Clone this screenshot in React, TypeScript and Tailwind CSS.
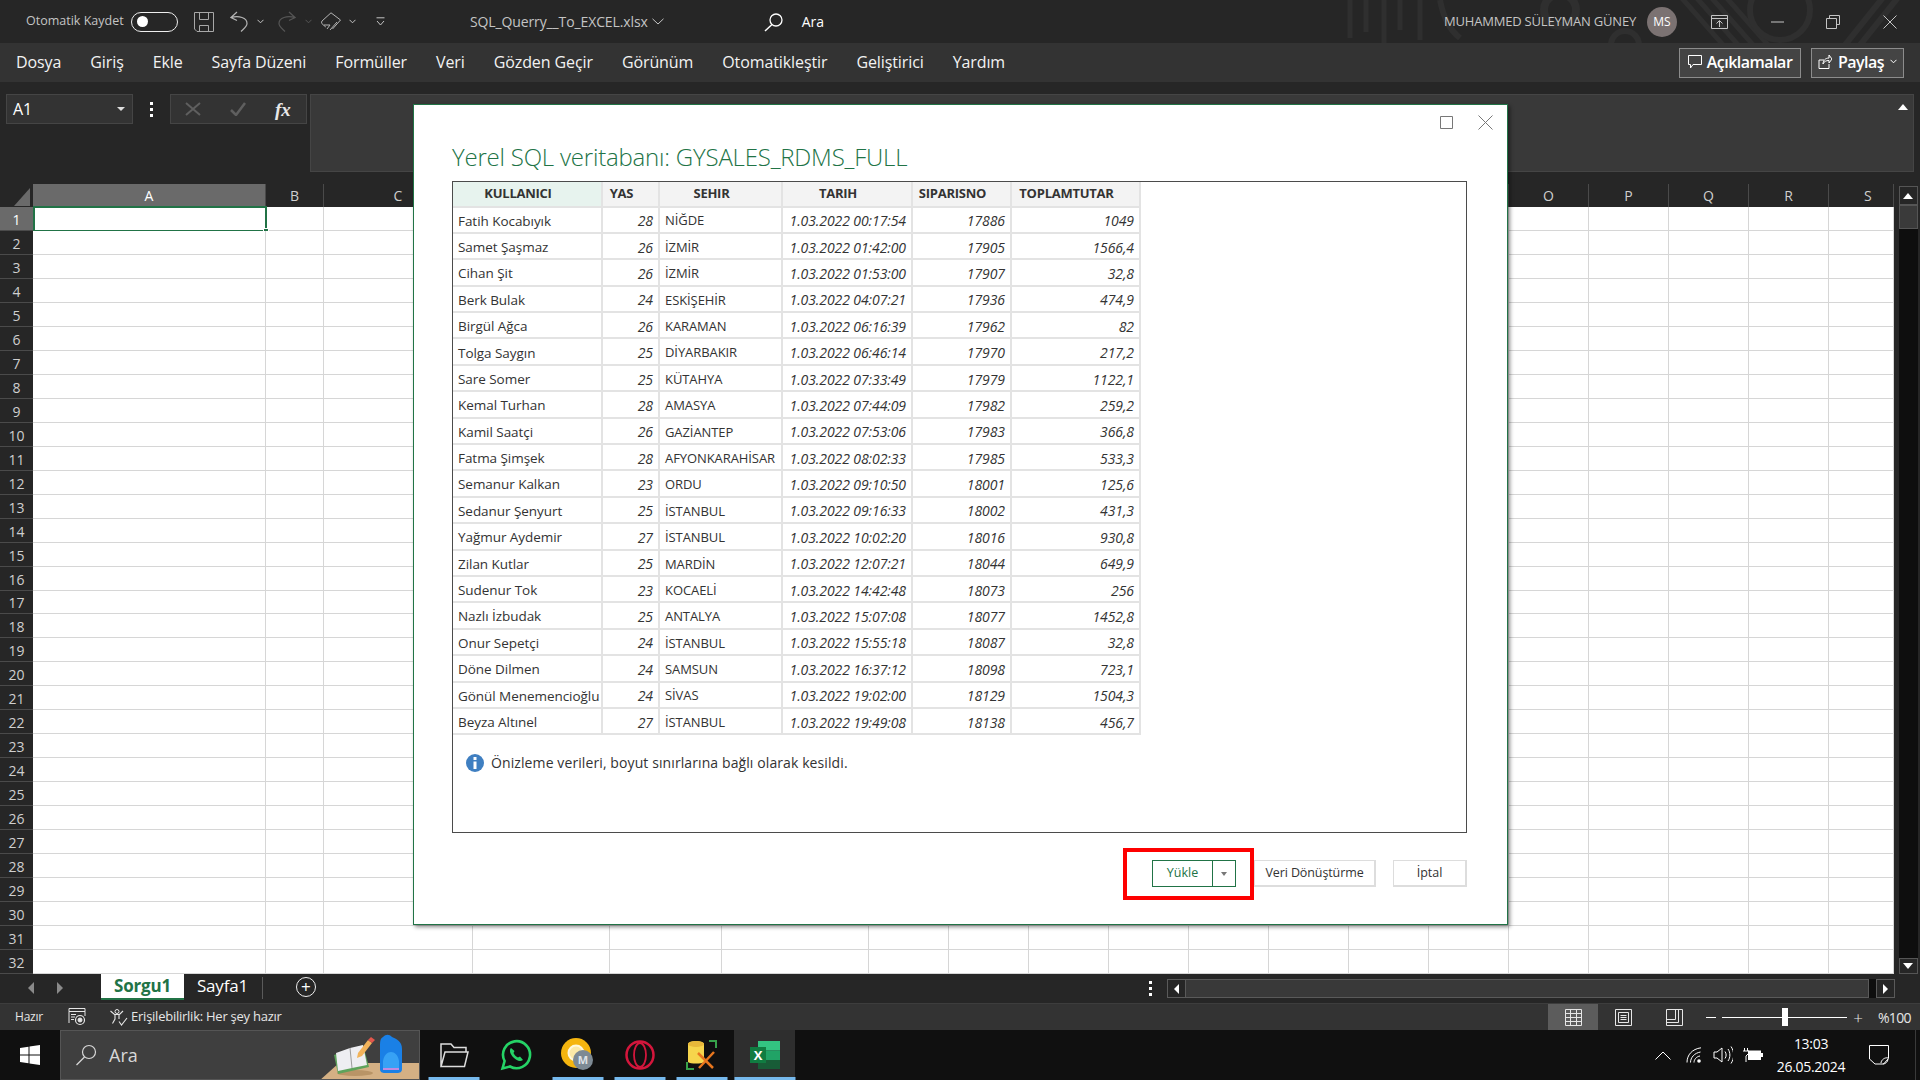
import React from "react";

const font = "font-['Open_Sans','Noto_Sans',sans-serif]";

const rows = [
  ["Fatih Kocabıyık", "28", "NİĞDE", "1.03.2022 00:17:54", "17886", "1049"],
  ["Samet Şaşmaz", "26", "İZMİR", "1.03.2022 01:42:00", "17905", "1566,4"],
  ["Cihan Şit", "26", "İZMİR", "1.03.2022 01:53:00", "17907", "32,8"],
  ["Berk Bulak", "24", "ESKİŞEHİR", "1.03.2022 04:07:21", "17936", "474,9"],
  ["Birgül Ağca", "26", "KARAMAN", "1.03.2022 06:16:39", "17962", "82"],
  ["Tolga Saygın", "25", "DİYARBAKIR", "1.03.2022 06:46:14", "17970", "217,2"],
  ["Sare Somer", "25", "KÜTAHYA", "1.03.2022 07:33:49", "17979", "1122,1"],
  ["Kemal Turhan", "28", "AMASYA", "1.03.2022 07:44:09", "17982", "259,2"],
  ["Kamil Saatçi", "26", "GAZİANTEP", "1.03.2022 07:53:06", "17983", "366,8"],
  ["Fatma Şimşek", "28", "AFYONKARAHİSAR", "1.03.2022 08:02:33", "17985", "533,3"],
  ["Semanur Kalkan", "23", "ORDU", "1.03.2022 09:10:50", "18001", "125,6"],
  ["Sedanur Şenyurt", "25", "İSTANBUL", "1.03.2022 09:16:33", "18002", "431,3"],
  ["Yağmur Aydemir", "27", "İSTANBUL", "1.03.2022 10:02:20", "18016", "930,8"],
  ["Zilan Kutlar", "25", "MARDİN", "1.03.2022 12:07:21", "18044", "649,9"],
  ["Sudenur Tok", "23", "KOCAELİ", "1.03.2022 14:42:48", "18073", "256"],
  ["Nazlı İzbudak", "25", "ANTALYA", "1.03.2022 15:07:08", "18077", "1452,8"],
  ["Onur Sepetçi", "24", "İSTANBUL", "1.03.2022 15:55:18", "18087", "32,8"],
  ["Döne Dilmen", "24", "SAMSUN", "1.03.2022 16:37:12", "18098", "723,1"],
  ["Gönül Menemencioğlu", "24", "SİVAS", "1.03.2022 19:02:00", "18129", "1504,3"],
  ["Beyza Altınel", "27", "İSTANBUL", "1.03.2022 19:49:08", "18138", "456,7"],
];

const menu = [
  "Dosya",
  "Giriş",
  "Ekle",
  "Sayfa Düzeni",
  "Formüller",
  "Veri",
  "Gözden Geçir",
  "Görünüm",
  "Otomatikleştir",
  "Geliştirici",
  "Yardım",
];

// sheet columns: label and width in px (D to N sit behind the dialog, no label needed)
const columns: [string, number][] = [
  ["A", 233],
  ["B", 58],
  ["C", 149],
  ["", 137],
  ["", 112],
  ["", 147],
  ["", 80],
  ["", 80],
  ["", 80],
  ["", 80],
  ["", 80],
  ["", 80],
  ["", 80],
  ["", 80],
  ["O", 80],
  ["P", 80],
  ["Q", 80],
  ["R", 80],
  ["S", 65],
];

const tableCols = [150, 57, 123, 130, 99, 129];
const tableHead = ["KULLANICI", "YAS", "SEHIR", "TARIH", "SIPARISNO", "TOPLAMTUTAR"];

const Ic: React.FC<{ w: number; h?: number; children: React.ReactNode; vb?: string; className?: string }> = ({
  w,
  h,
  children,
  vb,
  className,
}) => (
  <svg
    width={w}
    height={h ?? w}
    viewBox={vb ?? `0 0 ${w} ${h ?? w}`}
    fill="none"
    stroke="currentColor"
    className={`shrink-0 ${className ?? ""}`}
  >
    {children}
  </svg>
);

const Chevron = ({ className }: { className?: string }) => (
  <Ic w={7} h={5} className={className}>
    <path d="M.5 .8 3.500 3.800 6.500 .8" />
  </Ic>
);

const TitleBar = () => (
  <div className="relative flex h-[43px] shrink-0 items-center overflow-hidden bg-[#262626] text-[#c4c4c4]">
    {/* faint office background pattern */}
    <svg width="620" height="43" className="absolute right-0 top-0" fill="none" stroke="#2f2f2f">
      <path d="M50 0v38M66 0v32M84 0v48M100 0v30M120 0v40" strokeWidth="5" />
      <path d="M140 0c4 20 10 30 20 38" strokeWidth="6" />
      <circle cx="260" cy="10" r="16" strokeWidth="8" />
      <circle cx="325" cy="45" r="14" strokeWidth="6" />
      <path d="M380 -4l44 50M395 -4l44 50M410 -4l44 50M425 -4l44 50" strokeWidth="5" />
      <circle cx="480" cy="10" r="30" strokeWidth="6" />
      <path d="M545 45l40-50M560 45l40-50" strokeWidth="6" />
    </svg>
    <span className="ml-[26px] w-[97px] whitespace-nowrap text-[12.500px]">Otomatik Kaydet</span>
    <div className="ml-[8px] flex h-[20px] w-[47px] items-center rounded-full border border-[#eeeeee] pl-[5px]">
      <div className="h-[11px] w-[11px] rounded-full bg-white" />
    </div>
    <Ic w={20} h={20} className="ml-[16px] text-[#a8a8a8]">
      <path d="M.5 .5h19v19H3L.5 17zM5.500 .5v7h9v-7M5.500 19.500v-6h9v6" />
    </Ic>
    <Ic w={18} h={21} className="ml-[16px] text-[#b4b4b4]">
      <path d="M7 1 1 6.500l6 3M1 6.500c8-2 16 0 16 6 0 3-3 5-6 8" strokeWidth="1.200" />
    </Ic>
    <Chevron className="ml-[9px]" />
    <Ic w={18} h={21} className="ml-[14px] text-[#555555]">
      <path d="M11 1l6 5.500-6 3M17 6.500c-8-2-16 0-16 6 0 3 3 5 6 8" strokeWidth="1.200" />
    </Ic>
    <Chevron className="ml-[9px] text-[#555555]" />
    <Ic w={20} h={20} className="ml-[9px] text-[#b4b4b4]">
      <path d="M10 .8 19.500 8l-8 9M10 .8 1 9c-.8 1.500-.5 2.500.8 3.500l3 2.500M3 13h6l-3 4M9 18l7-8" />
    </Ic>
    <Chevron className="ml-[8px]" />
    <Ic w={9} h={9} className="ml-[20px]">
      <path d="M.5 .8h8M1 4l3.500 4L8 4" />
    </Ic>
    <span className="ml-[85px] whitespace-nowrap text-[14px] tracking-[-0.12px]">SQL_Querry__To_EXCEL.xlsx</span>
    <Ic w={12} h={7} className="ml-[4px]">
      <path d="M.5 .8 6 6l5.500-5.200" />
    </Ic>
    <Ic w={20} h={20} className="ml-[100px] text-white">
      <circle cx="12" cy="8" r="6" strokeWidth="1.300" />
      <path d="M8 12.500 1 19" strokeWidth="1.500" />
    </Ic>
    <span className="ml-[18px] text-[14px] text-white">Ara</span>
    <span className="relative ml-auto whitespace-nowrap text-[13px] tracking-[-0.2px]">MUHAMMED SÜLEYMAN GÜNEY</span>
    <div className="relative ml-[11px] flex h-[30px] w-[30px] items-center justify-center rounded-full bg-[#7b7272] text-[12px] text-white">
      MS
    </div>
    <Ic w={17} h={14} className="relative ml-[34px]">
      <path d="M.5 .5h16v13H.5zM.5 3.500h16M8.500 12V6M5.500 8.500l3-3 3 3" />
    </Ic>
    <Ic w={13} h={2} className="relative ml-[43px]">
      <path d="M0 1h13" />
    </Ic>
    <Ic w={14} h={14} className="relative ml-[42px]">
      <path d="M3.500 3V.5h10v9H11M.5 3.500h10v10H.5z" />
    </Ic>
    <Ic w={14} h={14} className="relative ml-[43px] mr-[23px]">
      <path d="M.5 .5l13 13M13.500 .5l-13 13" />
    </Ic>
  </div>
);

const MenuBar = () => (
  <div className="flex h-[39px] shrink-0 items-center bg-[#333333] pl-[16px] pr-[16px] text-[16px] text-[#f2f2f2]">
    <div className="mb-[2px] flex gap-[29px] tracking-[-0.1px]">
      {menu.map((m) => (
        <span key={m}>{m}</span>
      ))}
    </div>
    <div className="ml-auto flex h-[30px] w-[122px] items-center justify-center gap-[5px] border border-[#8c8c8c] bg-[#444444] pb-[2px] text-[16px] font-semibold tracking-[-0.5px] text-white">
      <Ic w={14} h={14}>
        <path d="M.5 .5h13v9H5L2.500 13V9.500h-2z" />
      </Ic>
      Açıklamalar
    </div>
    <div className="ml-[10px] flex h-[30px] w-[93px] items-center justify-center gap-[6px] border border-[#8c8c8c] bg-[#444444] pb-[2px] text-[16px] font-semibold tracking-[-0.5px] text-white">
      <Ic w={14} h={15}>
        <path d="M1 6v8.500h10V10M1 6h5M5 10c0-3 2-6 6-6V1l3 4-3 4V6.500c-3 0-5 1-6 3.500z" />
      </Ic>
      Paylaş
      <Chevron />
    </div>
  </div>
);

const FormulaBar = () => (
  <div className="flex h-[102px] shrink-0 items-start bg-[#262626] pl-[6px] pr-[6px] pt-[12px]">
    <div className="flex h-[30px] w-[127px] items-center border border-[#454545] bg-[#333333] pb-[1px] pl-[6px] pr-[7px] text-[16px] text-white">
      A1
      <span className="ml-auto h-0 w-0 border-x-[4px] border-t-[4px] border-x-transparent border-t-[#dddddd]" />
    </div>
    <div className="flex h-[30px] w-[37px] flex-col items-center justify-center gap-[3px]">
      <span className="h-[3px] w-[3px] bg-white" />
      <span className="h-[3px] w-[3px] bg-white" />
      <span className="h-[3px] w-[3px] bg-white" />
    </div>
    <div className="flex h-[30px] w-[137px] items-center border border-[#454545] bg-[#333333] pl-[14px] text-[#5f5f5f]">
      <Ic w={16} h={14}>
        <path d="M1 1l14 12M15 1 1 13" strokeWidth="2" />
      </Ic>
      <Ic w={16} h={14} className="ml-[29px]">
        <path d="M1 8l5 5L15 1" strokeWidth="2.500" />
      </Ic>
      <span className="ml-[29px] font-['Liberation_Serif',serif] text-[19px] font-bold italic leading-none text-[#e8e8e8]">fx</span>
    </div>
    <div className="relative ml-[3px] flex h-[78px] flex-1 justify-end border border-[#454545] bg-[#393939] pr-[5px] pt-[9px]">
      <Ic w={10} h={6} className="text-white">
        <path d="M0 6 5 0l5 6z" fill="currentColor" stroke="none" />
      </Ic>
    </div>
  </div>
);

const Sheet = () => (
  <div className="flex h-[790px] shrink-0 bg-[#262626]">
    <div className="w-[1894px]">
      <div className="flex h-[23px] text-[14px] text-[#cfcfcf]">
        <div className="flex w-[33px] items-end justify-end pb-[1px] pr-[3px]">
          <span className="h-0 w-0 border-b-[18px] border-l-[16px] border-b-[#6a6a6a] border-l-transparent" />
        </div>
        {columns.map(([c, w], i) => (
          <div
            key={i}
            style={{ width: w }}
            className={`flex items-center border-r border-[#4a4a4a] ${c === "A" ? "bg-[#6a6a6a] text-white" : ""} ${
              c === "S" ? "justify-start pl-[35px]" : "justify-center"
            }`}
          >
            {c}
          </div>
        ))}
      </div>
      {Array.from({ length: 32 }, (_, i) => (
        <div key={i} className="flex h-[23.970px]">
          <div
            className={`flex w-[33px] items-center justify-center border-b border-[#4a4a4a] pt-[2px] text-[14px] ${
              i === 0 ? "bg-[#6a6a6a] text-white" : "text-[#cfcfcf]"
            }`}
          >
            {i + 1}
          </div>
          <div className="relative flex flex-1 bg-white">
            {columns.map(([, w], j) => (
              <div key={j} style={{ width: w }} className="border-b border-r border-[#d6d6d6]" />
            ))}
            {i === 0 && (
              <div className="absolute -top-px left-0 h-[26px] w-[234px] border-2 border-[#217346]">
                <span className="absolute -bottom-[4px] -right-[4px] h-[6px] w-[6px] border border-white bg-[#217346]" />
              </div>
            )}
          </div>
        </div>
      ))}
    </div>
    <div className="flex w-[26px] flex-col items-center pl-[2px] pt-[2px]">
      <div className="flex h-[19px] w-[19px] items-center justify-center border border-[#555555] text-white">
        <Ic w={10} h={6}>
          <path d="M0 6 5 0l5 6z" fill="currentColor" stroke="none" />
        </Ic>
      </div>
      <div className="h-[24px] w-[19px] border border-[#555555] bg-[#3a3a3a]" />
      <div className="w-[19px] flex-1 bg-[#0e0e0e]" />
      <div className="flex h-[16px] w-[19px] items-center justify-center border border-[#555555] text-white">
        <Ic w={10} h={6}>
          <path d="M0 0 5 6l5-6z" fill="currentColor" stroke="none" />
        </Ic>
      </div>
    </div>
  </div>
);

const SheetTabs = () => (
  <div className="flex h-[29px] shrink-0 items-start bg-[#262626] text-[#cfcfcf]">
    <Ic w={6} h={12} className="ml-[28px] mt-[8px] text-[#8a8a8a]">
      <path d="M6 0 0 6l6 6z" fill="currentColor" stroke="none" />
    </Ic>
    <Ic w={6} h={12} className="ml-[23px] mt-[8px] text-[#8a8a8a]">
      <path d="M0 0l6 6-6 6z" fill="currentColor" stroke="none" />
    </Ic>
    <div className="ml-[38px] flex h-[26px] w-[83px] items-center justify-center border-b-2 border-[#217346] bg-white text-[17px] font-bold tracking-[-0.2px] text-[#217346]">
      Sorgu1
    </div>
    <span className="ml-[13px] text-[17px] leading-[24px] tracking-[-0.2px] text-white">Sayfa1</span>
    <div className="ml-[14px] mt-[3px] h-[22px] w-px bg-[#5a5a5a]" />
    <div className="ml-[33px] mt-[3px] flex h-[20px] w-[20px] items-center justify-center rounded-full border border-[#eeeeee] pb-[1px] text-[17px] leading-none text-white">
      +
    </div>
    <div className="ml-[832px] mt-[5px] flex h-[19px] w-[5px] flex-col items-center justify-center gap-[3px]">
      <span className="h-[3px] w-[3px] bg-white" />
      <span className="h-[3px] w-[3px] bg-white" />
      <span className="h-[3px] w-[3px] bg-white" />
    </div>
    <div className="ml-[14px] mt-[5px] flex h-[19px] w-[19px] items-center justify-center border border-[#5a5a5a] text-white">
      <Ic w={5} h={10}>
        <path d="M5 0 0 5l5 5z" fill="currentColor" stroke="none" />
      </Ic>
    </div>
    <div className="mt-[5px] h-[19px] w-[683px] border-y border-r border-[#5a5a5a] bg-[#393939]" />
    <div className="mt-[5px] h-[19px] w-[7px] bg-[#0e0e0e]" />
    <div className="mt-[5px] flex h-[19px] w-[19px] items-center justify-center border border-[#5a5a5a] text-white">
      <Ic w={5} h={10}>
        <path d="M0 0l5 5-5 5z" fill="currentColor" stroke="none" />
      </Ic>
    </div>
  </div>
);

const StatusBar = () => (
  <div className="flex h-[27px] shrink-0 items-center border-t border-[#3d3d3d] bg-[#333333] text-[12px] text-[#e6e6e6]">
    <span className="ml-[15px] tracking-[-0.2px]">Hazır</span>
    <Ic w={18} h={18} className="ml-[25px]">
      <path d="M1 .5h16v3H1zM1 3.500V15M17 3.500V8M3 6.500h5M3 9h4M3 11.500h3" />
      <circle cx="12" cy="12" r="4.500" strokeWidth="1.200" />
      <circle cx="12" cy="12" r="2" fill="currentColor" />
    </Ic>
    <Ic w={19} h={18} className="ml-[23px]">
      <circle cx="8" cy="3.500" r="2" />
      <path d="M1.500 3 5.500 6.500h5L14 3M6 6.500v4.500L3.500 15.500M10 6.500V11M10 13.500l2.500 3.500 5.500-7" strokeWidth="1.100" />
    </Ic>
    <span className="ml-[3px] text-[13px] tracking-[-0.25px]">Erişilebilirlik: Her şey hazır</span>
    <div className="ml-auto flex h-full w-[50px] items-center justify-center bg-[#5c5c5c]">
      <Ic w={17} h={17}>
        <path d="M.5 .5h16v16H.5zM.5 4.500h16M.5 8.500h16M.5 12.500h16M5.500 .5v16M11.500 .5v16" />
      </Ic>
    </div>
    <div className="flex w-[51px] justify-center">
      <Ic w={17} h={17}>
        <path d="M.5 .5h16v16H.5zM3.500 3.500h10v10h-10zM5.500 6.500h6M5.500 8.500h6M5.500 10.500h6" />
      </Ic>
    </div>
    <div className="flex w-[50px] justify-center">
      <Ic w={17} h={17}>
        <path d="M.5 .5h16v16H.5zM9.500 .5v10h-9M12.500 .5v13h-12" />
      </Ic>
    </div>
    <span className="ml-[7px] h-px w-[10px] bg-white" />
    <div className="relative ml-[6px] flex h-[18px] w-[125px] items-center">
      <div className="h-px w-full bg-white" />
      <div className="absolute left-[60px] h-[18px] w-[6px] bg-white" />
    </div>
    <span className="ml-[6px] w-[10px] text-center text-[17px] font-light leading-none">+</span>
    <span className="ml-[15px] mr-[10px] w-[32px] whitespace-nowrap text-[14px] tracking-[-0.7px]">%100</span>
  </div>
);

const TaskIcon: React.FC<{ active?: boolean; line?: boolean; children: React.ReactNode }> = ({
  active,
  line,
  children,
}) => (
  <div className={`relative flex h-full items-center justify-center ${active ? "w-[61px] bg-[#2e2e2e]" : "w-[62px]"}`}>
    {children}
    {line && (
      <span className={`absolute bottom-0 left-1/2 h-[3px] -translate-x-1/2 bg-[#76b9ed] ${active ? "w-[61px]" : "w-[51px]"}`} />
    )}
  </div>
);

const Taskbar = () => (
  <div className="flex h-[50px] shrink-0 items-center bg-[#101010] text-white">
    <div className="flex w-[60px] justify-center">
      <svg width="20" height="20" viewBox="0 0 20 20" fill="#ffffff">
        <path d="M0 3l8.500-1.200V9.500H0zM9.500 1.600 20 0v9.500H9.500zM0 10.500h8.500v7.700L0 17zM9.500 10.500H20V20L9.500 18.400z" />
      </svg>
    </div>
    <div className="relative flex h-full w-[360px] items-center overflow-hidden border border-[#555555] bg-[#3f3f3f] pl-[14px] text-[#d8d8d8]">
      <Ic w={22} h={22}>
        <circle cx="14" cy="8" r="6.500" strokeWidth="1.200" />
        <path d="M9.500 13 1.500 21" strokeWidth="1.200" />
      </Ic>
      <span className="ml-[12px] text-[18px]">Ara</span>
      {/* search box decoration: desk, notebook, backpack */}
      <svg width="100" height="50" className="absolute right-0 top-0">
        <path d="M0 50 20 32h80v18z" fill="#d4b084" />
        <ellipse cx="36" cy="42" rx="18" ry="3" fill="#b99466" />
        <path d="M15 24 44 14l6 22-31 7z" fill="#5ea35b" />
        <path d="M17 22 31 17l13-3 4 20-15 3-14 3z" fill="#eeeef2" />
        <path d="M31 17l2 20" stroke="#9c9c9c" fill="none" />
        <path d="M39 22 49 9l4 3-10 13-5 2z" fill="#f2b35a" />
        <path d="M49 9l3-3 4 3-3 3z" fill="#e2574c" />
        <path d="M64 6c3-3 6-3 9 0 4 2 10 4 10 12v20c0 3-2 4-5 4H66c-3 0-5-1-5-4V18c0-8 0-10 3-12z" fill="#1a80e6" />
        <path d="M64 30c2-12 14-12 16 0v8H64z" fill="#37a2f5" />
        <path d="M64 37h16v2H64z" fill="#c08ae0" />
      </svg>
    </div>
    <div className="ml-[3px] h-full">
      <TaskIcon line>
        <Ic w={30} h={26} className="text-[#dddddd]">
          <path d="M2 24.500V2h10l3 3.500h12V10M7 10h22l-3.500 14.500H2L6 10z" strokeWidth="1.500" />
        </Ic>
      </TaskIcon>
    </div>
    <TaskIcon>
      <svg width="32" height="32" viewBox="0 0 32 32" fill="none">
        <path d="M2.500 29.500 4.600 22A13.500 13.500 0 1 1 10 27.500z" stroke="#25d366" strokeWidth="2.600" />
        <path d="M11 9c-2 2-1 6 2.500 9.500S20 23 23 21l-3-3.500-2 1c-2-1-3.500-2.500-4.500-4.500l1-2z" fill="#25d366" />
      </svg>
    </TaskIcon>
    <TaskIcon line>
      <svg width="34" height="34" viewBox="0 0 34 34" fill="none">
        <circle cx="15" cy="15" r="15" fill="#f5b50f" />
        <circle cx="15" cy="15" r="7.500" fill="#fbe9a8" stroke="#fff8dc" strokeWidth="2" />
        <circle cx="22" cy="22" r="10" fill="#7d8a94" />
        <text x="22" y="26" textAnchor="middle" fill="#dfe3e6" fontSize="11" fontFamily="Open Sans" fontWeight="700">M</text>
      </svg>
    </TaskIcon>
    <TaskIcon line>
      <svg width="30" height="30" viewBox="0 0 30 30" fill="none">
        <circle cx="15" cy="15" r="13.500" stroke="#d4163c" strokeWidth="2.500" />
        <ellipse cx="15" cy="15" rx="6" ry="12" stroke="#d4163c" strokeWidth="1.800" />
      </svg>
    </TaskIcon>
    <TaskIcon line>
      <svg width="32" height="30" viewBox="0 0 32 30" fill="none">
        <path d="M2 4c0-4 16-4 16 0v18c-2 2-14 2-16 0z" fill="#f6d54c" />
        <ellipse cx="10" cy="4" rx="8" ry="3" fill="#e8b83a" />
        <path d="M23 1h7v7M1 22v7h7" stroke="#37a24a" strokeWidth="2" />
        <path d="M12 13l15 15M28 12 13 28" stroke="#e8761e" strokeWidth="2.500" />
      </svg>
    </TaskIcon>
    <div className="ml-[1px] h-full">
      <TaskIcon active line>
        <svg width="30" height="28" viewBox="0 0 30 28">
          <rect x="8" y="0" width="22" height="9.500" fill="#33c481" />
          <rect x="8" y="9.500" width="22" height="9.500" fill="#21a366" />
          <rect x="8" y="19" width="22" height="9" fill="#185c37" />
          <rect x="0" y="6" width="16" height="16" fill="#107c41" />
          <text x="8" y="19" textAnchor="middle" fill="#ffffff" fontSize="13" fontWeight="700" fontFamily="Open Sans">X</text>
        </svg>
      </TaskIcon>
    </div>
    <Ic w={16} h={9} className="ml-[860px] text-white">
      <path d="M.5 8.500 8 1l7.500 7.500" />
    </Ic>
    <Ic w={16} h={16} className="ml-[15px]">
      <path d="M1 15.500C1 8 6 2 15 .8M4.500 15.500C4.500 10.500 8.500 6 14.500 5M8 15.500c0-3 2.500-6 6-6.500" />
      <circle cx="13" cy="14" r="1.800" fill="currentColor" stroke="none" />
    </Ic>
    <Ic w={20} h={18} className="ml-[11px]">
      <path d="M1 6h3l5-4v14l-5-4H1zM12 5.500c1.500 2 1.500 5 0 7M15 3c2.500 3.500 2.500 8.500 0 12M18 .5c3.500 5 3.500 12 0 17" />
    </Ic>
    <svg width="20" height="14" viewBox="0 0 20 14" className="ml-[10px]">
      <path d="M1.500 0v3M4.500 0v3M0 3h6v2L3 8v6" stroke="#ffffff" fill="none" />
      <rect x="5" y="2.500" width="13" height="9.500" fill="#ffffff" />
      <rect x="18" y="5" width="2" height="4" fill="#ffffff" />
    </svg>
    <div className="ml-[12px] flex w-[72px] flex-col items-center text-[14px] leading-[23px] tracking-[-0.3px]">
      <span>13:03</span>
      <span>26.05.2024</span>
    </div>
    <Ic w={20} h={20} className="ml-[22px]">
      <path d="M.5 .5h19v13l-5 5.500H6l-5.500-5z" />
      <path d="M12 18c0-3 4-6 7-5M14 19c2 0 5-2 5-5" />
    </Ic>
    <div className="ml-[26px] h-full w-px bg-[#3a3a3a]" />
  </div>
);

const Dialog = () => (
  <div className={`absolute left-[413px] top-[104px] flex h-[821px] w-[1095px] flex-col border border-[#217346] bg-white pl-[38px] pr-[40px] shadow-[2px_2px_4px_rgba(0,0,0,0.45)] ${font}`}>
    <div className="flex h-[26px] shrink-0 items-end justify-end gap-[26px] text-[#777777]">
      <Ic w={13} h={13} className="mb-[2px] mr-[-1px]">
        <path d="M.5 .5h12v12H.5z" />
      </Ic>
      <Ic w={15} h={15} className="mb-[1px] mr-[-26px]">
        <path d="M.5 .5l14 14M14.500 .5l-14 14" />
      </Ic>
    </div>
    <div className="flex h-[50px] shrink-0 items-center whitespace-nowrap pt-[2px] text-[24px] font-light tracking-[-0.2px] text-[#217346]">
      Yerel SQL veritabanı: GYSALES_RDMS_FULL
    </div>
    <div className="h-[652px] shrink-0 border border-[#4b4b4b] text-[13.500px] text-[#333333]">
      <div className="flex h-[25.500px] w-[690px] text-[13px] font-bold">
        {tableHead.map((h, i) => (
          <div
            key={h}
            style={{ width: tableCols[i] }}
            className={`flex items-center justify-center whitespace-nowrap border-b-2 border-r-2 border-[#e3e3e3] pr-[18px] tracking-[-0.25px] ${
              i === 0 ? "bg-[#e7f3ee]" : "bg-[#f3f3f3]"
            }`}
          >
            {h}
          </div>
        ))}
      </div>
      {rows.map((r) => (
        <div key={r[4]} className="flex h-[26.400px] w-[690px]">
          {r.map((v, i) => (
            <div
              key={i}
              style={{ width: tableCols[i] }}
              className={`flex items-center overflow-hidden whitespace-nowrap border-b-2 border-r-2 border-[#e3e3e3] px-[5px] ${
                i === 0
                  ? "justify-start pt-[2px] tracking-[-0.05px]"
                  : i === 2
                    ? "justify-start pt-[3px] text-[13px] tracking-[-0.08px]"
                    : "justify-end pt-[2px] text-[14px] italic tracking-[-0.08px]"
              }`}
            >
              {v}
            </div>
          ))}
        </div>
      ))}
      <div className="ml-[13px] mt-[17px] flex items-center gap-[7px] text-[14px] tracking-[0.1px] text-[#333333]">
        <svg width="18" height="18" viewBox="0 0 18 18">
          <circle cx="9" cy="9" r="9" fill="#3f7fc1" />
          <rect x="7.500" y="7.500" width="3" height="7.500" fill="#ffffff" />
          <rect x="7.500" y="3" width="3" height="3" fill="#ffffff" />
        </svg>
        Önizleme verileri, boyut sınırlarına bağlı olarak kesildi.
      </div>
    </div>
    <div className="relative mt-[27px] flex h-[27px] shrink-0 justify-end text-[12.500px] text-[#333333]">
      <div className="flex h-full w-[84px] border border-[#217346] text-[#217346]">
        <div className="flex flex-1 items-center justify-center border-r border-[#217346]">Yükle</div>
        <div className="flex w-[22px] items-center justify-center">
          <span className="h-0 w-0 border-x-[3.500px] border-t-[4px] border-x-transparent border-t-[#777777]" />
        </div>
      </div>
      <div className="ml-[18px] flex h-full w-[122px] items-center justify-center border-b-2 border-l border-r-2 border-t border-[#dddddd] tracking-[-0.1px]">
        Veri Dönüştürme
      </div>
      <div className="ml-[17px] flex h-full w-[74px] items-center justify-center border-b-2 border-l border-r-2 border-t border-[#dddddd]">
        İptal
      </div>
      {/* red annotation around the load button */}
      <div className="absolute -top-[12px] right-[213px] h-[52px] w-[131px] border-[4px] border-[#fe0000]" />
    </div>
  </div>
);

const App: React.FC = () => {
  return (
    <div className={`relative flex h-[1080px] w-[1920px] flex-col overflow-hidden bg-[#262626] ${font}`}>
      <TitleBar />
      <MenuBar />
      <FormulaBar />
      <Sheet />
      <SheetTabs />
      <StatusBar />
      <Taskbar />
      <Dialog />
    </div>
  );
};

export default App;
